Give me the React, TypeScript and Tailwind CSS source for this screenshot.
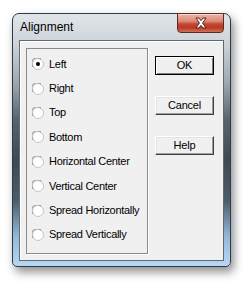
const items = [
  'Left',
  'Right',
  'Top',
  'Bottom',
  'Horizontal Center',
  'Vertical Center',
  'Spread Horizontally',
  'Spread Vertically',
];

function Radio({ checked }: { checked: boolean }) {
  return (
    <svg width="12" height="12" viewBox="0 0 12 12" className="shrink-0">
      <circle cx="6" cy="6" r="5.5" fill="#ffffff" stroke="#c4c4c4" />
      <path d="M1.2 9 A5.2 5.2 0 0 1 9 1.2" fill="none" stroke="#8a8a8a" strokeWidth="1" />
      {checked && <circle cx="6" cy="6" r="2" fill="#000" />}
    </svg>
  );
}

function Button({ label, isDefault }: { label: string; isDefault?: boolean }) {
  return (
    <div
      className={
        isDefault
          ? 'h-[19px] w-[59px] border border-black bg-[#f0f0f0] flex items-center justify-center shadow-[inset_1px_1px_0_#ffffff,inset_-1px_-1px_0_#808080]'
          : 'h-[19px] w-[59px] border border-t-[#ffffff] border-l-[#ffffff] border-b-[#404040] border-r-[#404040] bg-[#f0f0f0] flex items-center justify-center shadow-[inset_-1px_-1px_0_#a0a0a0,inset_1px_1px_0_#e3e3e3]'
      }
    >
      <span className="text-[11px] leading-none tracking-[-0.2px] text-black">{label}</span>
    </div>
  );
}

export default function App() {
  return (
    <div
      className="w-[251px] h-[288px] bg-white overflow-hidden pl-[12px] pt-[13px]"
      style={{ fontFamily: '"Liberation Sans", Arial, sans-serif' }}
    >
      <div className="w-[219px] h-[254px] rounded-t-[7px] rounded-b-[5px] border border-[#2e3a44] bg-[linear-gradient(180deg,#e1e5e9_0%,#ccd3d9_12%,#9aa6ae_28%,#56646e_42%,#3c4a54_58%,#4c5c68_74%,#92b6da_88%,#b8d7f5_100%)] shadow-[3px_5px_10px_rgba(0,0,0,0.45)] flex flex-col relative">
        <div className="h-[26px] flex items-start relative">
          <span className="ml-[7px] mt-[6px] text-[12px] leading-[15px] text-black">Alignment</span>
          <div className="absolute right-[6px] -top-[1px] w-[47px] h-[20px] rounded-b-[4px] border border-[#5b2a22] bg-[linear-gradient(180deg,#edb4a6_0%,#dc8a78_40%,#c24a34_55%,#b83a24_75%,#d47056_100%)] flex items-center justify-center shadow-[inset_0_1px_0_rgba(255,255,255,0.5)]">
            <svg width="14" height="12" viewBox="0 0 14 12">
              <path
                d="M2 1 L5 1 L7 3.6 L9 1 L12 1 L8.6 6 L12 11 L9 11 L7 8.4 L5 11 L2 11 L5.4 6 Z"
                fill="#ffffff"
                stroke="#4a2520"
                strokeWidth="1"
                strokeLinejoin="round"
              />
            </svg>
          </div>
        </div>
        <div className="mx-[6px] h-[221px] border border-[#5e6a74] bg-[#f0f0f0] shadow-[inset_1px_1px_0_#ffffff]">
          <div className="flex pl-[6px] pt-[7px]">
            <div className="w-[122px] h-[206px] border border-[#8a8a8a] shadow-[1px_1px_0_#ffffff] pt-[3px] pl-[5px]">
              {items.map((it, i) => (
                <div key={it} className="h-[24.4px] flex items-center gap-[5px]">
                  <Radio checked={i === 0} />
                  <span className="text-[11px] leading-none tracking-[-0.3px] text-black whitespace-nowrap">{it}</span>
                </div>
              ))}
            </div>
            <div className="ml-[7px] mt-[8px] flex flex-col gap-[21px]">
              <Button label="OK" isDefault />
              <Button label="Cancel" />
              <Button label="Help" />
            </div>
          </div>
        </div>
      </div>
    </div>
  );
}
